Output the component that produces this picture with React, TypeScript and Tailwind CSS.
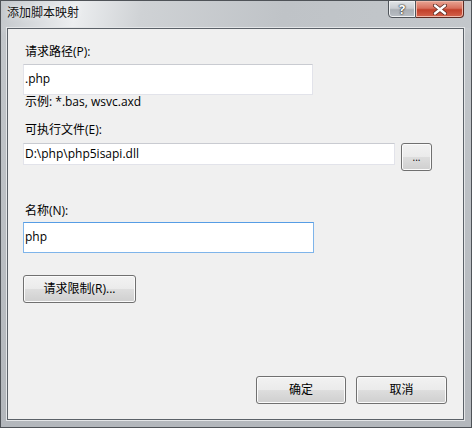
const btn =
  "h-[28px] rounded-[3px] border border-[#707070] bg-[linear-gradient(180deg,#f2f2f2_0%,#ebebeb_48%,#dddddd_52%,#cfcfcf_100%)] shadow-[inset_0_0_0_1px_#fbfbfb] flex items-center justify-center text-[12px] text-black";

const App = () => {
  return (
    <div className="w-[472px] h-[428px] flex flex-col bg-[linear-gradient(180deg,#d9dcdf_0%,#c2c6ca_8%,#b3b7bc_100%)] border border-[#4f5358] font-['Open_Sans','Noto_Sans_CJK_SC',sans-serif] overflow-hidden">
      {/* title bar */}
      <div className="h-[27px] flex flex-row items-start bg-[linear-gradient(100deg,#c3c7cb_0%,#eceef0_16%,#cfd2d5_30%,#bfc3c7_60%,#c3c7cb_100%)]">
        <span className="ml-[6px] mt-[4px] text-[12px] leading-[16px] text-[#111] [text-shadow:0_0_6px_#ffffff]">
          添加脚本映射
        </span>
        <div className="flex-1" />
        <div className="flex flex-row mr-[7px] -mt-px">
          <div className="w-[28px] h-[18px] rounded-bl-[4px] border border-[#4f545a] bg-[linear-gradient(180deg,#e2e5e8_0%,#c9cdd2_45%,#a9aeb4_55%,#b9bec4_100%)] shadow-[inset_0_0_0_1px_#eef0f2] flex items-center justify-center">
            <span className="text-[13px] leading-none font-bold text-white [text-shadow:0_0_1px_#333,0_0_1px_#333,0_0_2px_#333]">
              ?
            </span>
          </div>
          <div className="w-[48px] h-[18px] rounded-br-[4px] border border-l-0 border-[#5e2a22] bg-[linear-gradient(180deg,#e9a594_0%,#d8705d_45%,#c2402a_55%,#d4634c_100%)] shadow-[inset_0_0_0_1px_#f0b7a8] flex items-center justify-center">
            <svg width="14" height="11" viewBox="0 0 14 11">
              <path d="M2 1.5 L12 9.5 M12 1.5 L2 9.5" stroke="#5a2a22" strokeWidth="4" strokeLinecap="round" />
              <path d="M2 1.5 L12 9.5 M12 1.5 L2 9.5" stroke="#ffffff" strokeWidth="2.4" strokeLinecap="round" />
            </svg>
          </div>
        </div>
      </div>

      {/* client area */}
      <div className="ml-[6px] mr-[7px] h-[392px] border border-[#5b6168] shadow-[0_0_0_1px_#e4e6e8] bg-[#f0f0f0] flex flex-col pl-[15px] pr-[16px] pt-[15px] pb-[15px] text-[12px] text-black">
        <span className="ml-[2px] leading-[16px]">请求路径(P):</span>
        <div className="mt-[4px] w-[290px] h-[31px] bg-white border border-[#e2e3ea] border-t-[#c9cbd1] flex items-center pl-[1px] pb-[2px]">
          .php
        </div>
        <span className="ml-[2px] leading-[14px]">示例: *.bas, wsvc.axd</span>

        <span className="ml-[2px] mt-[13px] leading-[16px]">可执行文件(E):</span>
        <div className="mt-[5px] flex flex-row items-start gap-[6px]">
          <div className="w-[372px] h-[22px] bg-white border border-[#e2e3ea] border-t-[#c9cbd1] flex items-center pl-[1px]">
            D:\php\php5isapi.dll
          </div>
          <button className={btn + " w-[31px]"}>
            <span className="text-[10px] leading-none -mt-[1px]">...</span>
          </button>
        </div>

        <span className="ml-[2px] mt-[32px] leading-[16px]">名称(N):</span>
        <div className="mt-[3px] w-[291px] h-[31px] bg-white border border-[#7eb4ea] border-t-[#569de5] flex items-center pl-[1px] pb-[2px]">
          php
        </div>

        <button className={btn + " mt-[22px] w-[113px]"}>请求限制(R)...</button>

        <div className="mt-auto flex flex-row justify-end gap-[10px]">
          <button className={btn + " w-[90px] border-[#3c7fb1] shadow-[inset_0_0_0_1px_#9fe0fb]"}>确定</button>
          <button className={btn + " w-[91px]"}>取消</button>
        </div>
      </div>
    </div>
  );
};

export default App;
